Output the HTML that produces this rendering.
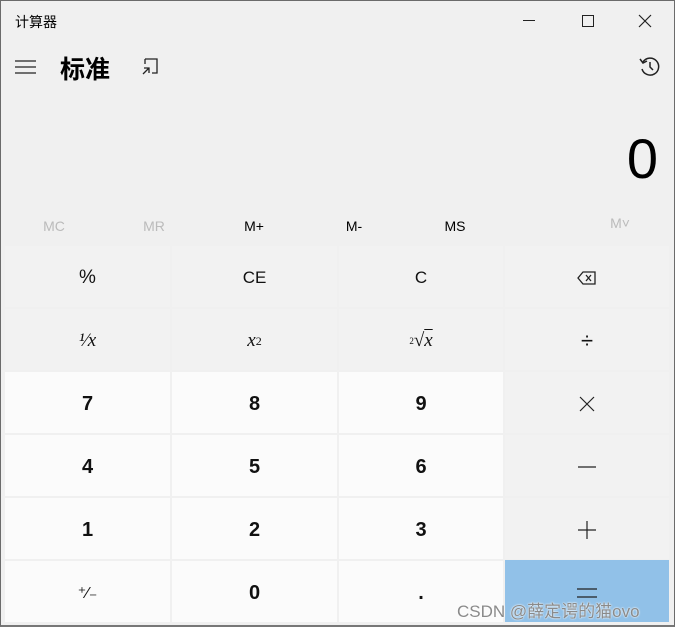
<!DOCTYPE html>
<html><head><meta charset="utf-8"><style>
*{margin:0;padding:0;box-sizing:border-box}
body{width:675px;height:627px;overflow:hidden;background:#eeeeee;font-family:"Segoe UI","Liberation Sans","Noto Sans CJK SC",sans-serif;position:relative;color:#000}
.frame{position:absolute;left:0;top:0;width:675px;height:627px;border:1px solid #6b6b6b;border-bottom:2px solid #777;background:#f0f0f0}
.a{position:absolute}
.k{position:absolute;display:flex;align-items:center;justify-content:center;font-size:19px;background:#f2f2f2;color:#111;padding-top:3px}
.d{background:#fbfbfb;font-weight:bold;font-size:20px}
.m{position:absolute;top:218px;font-size:14px;width:60px;text-align:center}
</style></head><body><div class="frame"></div>
<div class="a" style="left:15px;top:12px;font-size:14px;font-family:'Liberation Sans','Noto Sans CJK SC',sans-serif">计算器</div>
<div class="a" style="left:523px;top:20px;width:12px;height:1px;background:#222"></div>
<div class="a" style="left:582px;top:15px;width:12px;height:12px;border:1px solid #222"></div>
<svg class="a" style="left:638px;top:14px" width="14" height="14"><path d="M1 1L13 13M13 1L1 13" stroke="#222" stroke-width="1.2"/></svg>
<svg class="a" style="left:15px;top:59px" width="22" height="16"><path d="M0 2H21M0 8H21M0 14H21" stroke="#222" stroke-width="1.3"/></svg>
<div class="a" style="left:60px;top:50px;font-size:25px;font-weight:bold;font-family:'Liberation Sans','Noto Sans CJK SC',sans-serif">标准</div>
<svg class="a" style="left:139px;top:58px" width="20" height="18"><path d="M6 1H18V15H13M6 1V6M4 16L10 10M5 10H10V15" stroke="#222" stroke-width="1.3" fill="none"/></svg>
<svg class="a" style="left:639px;top:56px" width="22" height="22"><path d="M4 6A8.5 8.5 0 1 1 3 13" stroke="#222" stroke-width="1.5" fill="none"/><path d="M1 3L4 7L8 5M11 6V11L14 14" stroke="#222" stroke-width="1.5" fill="none"/></svg>
<div class="a" style="right:17px;top:124px;font-size:56px;line-height:70px">0</div>
<div class="m" style="left:24px;color:#bbb">MC</div>
<div class="m" style="left:124px;color:#bbb">MR</div>
<div class="m" style="left:224px">M+</div>
<div class="m" style="left:324px">M-</div>
<div class="m" style="left:425px">MS</div>
<div class="m" style="left:590px;color:#bbb;top:215px">M˅</div>
<div class="k" style="left:5px;top:246px;width:165px;height:61px">%</div>
<div class="k" style="left:172px;top:246px;width:165px;height:61px;font-size:17px">CE</div>
<div class="k" style="left:339px;top:246px;width:164px;height:61px;font-size:17px">C</div>
<div class="k" style="left:505px;top:246px;width:164px;height:61px"><svg width="20" height="14"><path d="M6 1H18V13H6L1 7Z" stroke="#222" stroke-width="1.3" fill="none"/><path d="M9 4L14 10M14 4L9 10" stroke="#222" stroke-width="1.3"/></svg></div>
<div class="k" style="left:5px;top:309px;width:165px;height:61px;font-family:'Liberation Serif',serif;font-style:italic">¹⁄x</div>
<div class="k" style="left:172px;top:309px;width:165px;height:61px;font-family:'Liberation Serif',serif"><i>x</i><sup style="font-size:12px">2</sup></div>
<div class="k" style="left:339px;top:309px;width:164px;height:61px;font-family:'Liberation Serif',serif"><sup style="font-size:9px">2</sup>√<i style="text-decoration:overline">x</i></div>
<div class="k" style="left:505px;top:309px;width:164px;height:61px;font-size:22px">÷</div>
<div class="k d" style="left:5px;top:372px;width:165px;height:61px">7</div>
<div class="k d" style="left:172px;top:372px;width:165px;height:61px">8</div>
<div class="k d" style="left:339px;top:372px;width:164px;height:61px">9</div>
<div class="k" style="left:505px;top:372px;width:164px;height:61px"><svg width="16" height="16"><path d="M1 1L15 15M15 1L1 15" stroke="#222" stroke-width="1.2"/></svg></div>
<div class="k d" style="left:5px;top:435px;width:165px;height:61px">4</div>
<div class="k d" style="left:172px;top:435px;width:165px;height:61px">5</div>
<div class="k d" style="left:339px;top:435px;width:164px;height:61px">6</div>
<div class="k" style="left:505px;top:435px;width:164px;height:61px"><svg width="18" height="4"><path d="M0 2H18" stroke="#222" stroke-width="1.2"/></svg></div>
<div class="k d" style="left:5px;top:498px;width:165px;height:61px">1</div>
<div class="k d" style="left:172px;top:498px;width:165px;height:61px">2</div>
<div class="k d" style="left:339px;top:498px;width:164px;height:61px">3</div>
<div class="k" style="left:505px;top:498px;width:164px;height:61px"><svg width="18" height="18"><path d="M0 9H18M9 0V18" stroke="#222" stroke-width="1.2"/></svg></div>
<div class="k d" style="left:5px;top:561px;width:165px;height:61px;font-weight:normal;font-size:16px">⁺∕₋</div>
<div class="k d" style="left:172px;top:561px;width:165px;height:61px">0</div>
<div class="k d" style="left:339px;top:561px;width:164px;height:61px">.</div>
<div class="k" style="left:505px;top:560px;width:164px;height:62px;background:#91c1e8"><svg width="20" height="12"><path d="M0 2H20M0 10H20" stroke="#222" stroke-width="1.3"/></svg></div>
<div class="a" style="left:457px;top:597px;font-size:17px;color:#8a8a8a;text-shadow:0 0 2px #fff,0 0 1px #fff;font-family:'Liberation Sans','Noto Sans CJK SC',sans-serif">CSDN @薛定谔的猫ovo</div>
</body></html>
